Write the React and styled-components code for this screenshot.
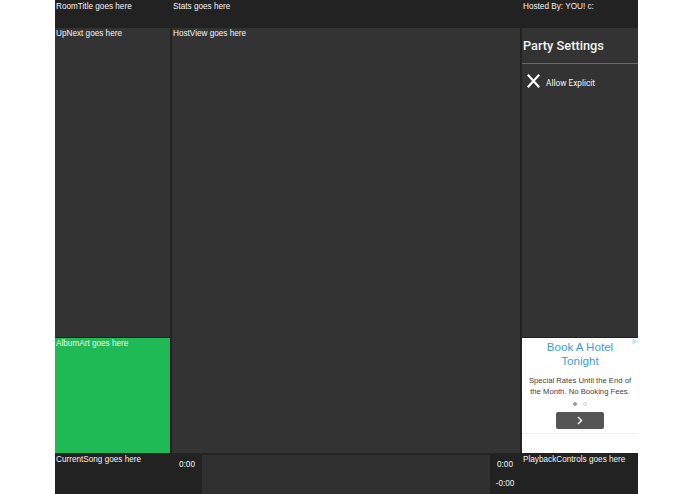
import styled, { createGlobalStyle } from 'styled-components';

const GlobalStyle = createGlobalStyle`
    html, body {
        margin: 0;
        padding: 0;
        background: #fff;
    }
    * {
        box-sizing: border-box;
    }
`;

function CrossIcon() {
    return (
        <svg width='13' height='14' viewBox='0 0 13 14'>
            <path d='M1.5 1.5 L11.5 12.5 M11.5 1.5 L1.5 12.5' stroke='#fff' strokeWidth='2.1' strokeLinecap='square' />
        </svg>
    );
}

function ChevronIcon() {
    return (
        <svg width='6' height='9' viewBox='0 0 6 9'>
            <path d='M1 1 L4.5 4.5 L1 8' fill='none' stroke='#fff' strokeWidth='1.4' />
        </svg>
    );
}

function AdChoices() {
    return (
        <svg width='6' height='7' viewBox='0 0 6 7'>
            <path d='M0.5 0.5 L5.5 3.5 L0.5 6.5 Z' fill='#bfe3f5' />
        </svg>
    );
}

function App() {
    return (
        <>
            <GlobalStyle />
            <Shell>
                <HeaderCell>RoomTitle goes here</HeaderCell>
                <HeaderCell>Stats goes here</HeaderCell>
                <HeaderCell>Hosted By: YOU! c:</HeaderCell>

                <Column>
                    <Panel>UpNext goes here</Panel>
                    <AlbumArt>AlbumArt goes here</AlbumArt>
                </Column>
                <Panel>HostView goes here</Panel>
                <Column>
                    <Settings>
                        <SettingsTitle>Party Settings</SettingsTitle>
                        <SettingRow>
                            <CrossIcon />
                            <span>Allow Explicit</span>
                        </SettingRow>
                    </Settings>
                    <Ad>
                        <AdBadge>
                            <AdChoices />
                        </AdBadge>
                        <AdHeadline>
                            Book A Hotel
                            <br />
                            Tonight
                        </AdHeadline>
                        <AdBody>
                            Special Rates Until the End of
                            <br />
                            the Month. No Booking Fees.
                        </AdBody>
                        <Dots>
                            <Dot $active />
                            <Dot />
                        </Dots>
                        <AdButton>
                            <ChevronIcon />
                        </AdButton>
                        <AdRule />
                    </Ad>
                </Column>

                <FooterCell>CurrentSong goes here</FooterCell>
                <Transport>
                    <TimeColumn>
                        <Time>0:00</Time>
                    </TimeColumn>
                    <ProgressTrack />
                    <TimeColumn>
                        <Time>0:00</Time>
                        <Time>-0:00</Time>
                    </TimeColumn>
                </Transport>
                <FooterCell>PlaybackControls goes here</FooterCell>
            </Shell>
        </>
    );
}

export default App;

const Shell = styled.div`
    width: 583px;
    height: 494px;
    margin: 0 auto;
    transform: translateX(-1px);
    background: #222;
    display: grid;
    grid-template-columns: 115px 348px 116px;
    grid-template-rows: 28px 425px 41px;
    column-gap: 2px;
    font-family: 'Liberation Sans', Arial, sans-serif;
    font-size: 8.2px;
    color: #f4f4f4;
`;

const HeaderCell = styled.div`
    padding: 2px 1px;
    line-height: 10px;
`;

const FooterCell = styled.div`
    padding: 2px 1px;
    line-height: 10px;
`;

const Column = styled.div`
    display: flex;
    flex-direction: column;
    gap: 1px;
`;

const Panel = styled.div`
    flex: 1;
    background: #333;
    padding: 1px 1px;
    line-height: 10px;
`;

const AlbumArt = styled.div`
    height: 115px;
    background: #1fba56;
    padding: 1px 1px;
    line-height: 10px;
`;

const Settings = styled.div`
    flex: 1;
    background: #333;
    font-family: Roboto, 'Liberation Sans', sans-serif;
`;

const SettingsTitle = styled.div`
    font-size: 12.8px;
    font-weight: 500;
    padding: 10px 1px 0;
    height: 36px;
    line-height: 16px;
    border-bottom: 1.5px solid #6a6a6a;
`;

const SettingRow = styled.div`
    display: flex;
    align-items: center;
    gap: 6px;
    padding: 10px 5px 0;
    font-size: 8.3px;

    span {
        margin-top: 3px;
    }
`;

const Ad = styled.div`
    height: 115px;
    background: #fff;
    position: relative;
    display: flex;
    flex-direction: column;
    align-items: center;
    font-family: 'Liberation Sans', Arial, sans-serif;
`;

const AdBadge = styled.div`
    position: absolute;
    top: 0;
    right: 0;
    line-height: 0;
`;

const AdHeadline = styled.div`
    margin-top: 2px;
    font-size: 11.6px;
    line-height: 14px;
    color: #3d9be9;
    text-align: center;
`;

const AdBody = styled.div`
    margin-top: 8px;
    font-size: 7.7px;
    line-height: 10.5px;
    color: #444;
    text-align: center;
`;

const Dots = styled.div`
    display: flex;
    gap: 6px;
    margin-top: 5px;
`;

const Dot = styled.span`
    width: 4px;
    height: 4px;
    border-radius: 50%;
    background: ${(p) => (p.$active ? '#9a9a9a' : '#fff')};
    border: 1px solid ${(p) => (p.$active ? '#9a9a9a' : '#d4d4d4')};
`;

const AdButton = styled.div`
    width: 48px;
    height: 17px;
    margin-top: 6px;
    border-radius: 2px;
    background: #555;
    display: flex;
    align-items: center;
    justify-content: center;
`;

const AdRule = styled.div`
    align-self: stretch;
    height: 1px;
    margin-top: 4px;
    background: #f0f0f0;
`;

const Transport = styled.div`
    display: grid;
    grid-template-columns: 30px 1fr 30px;
`;

const TimeColumn = styled.div`
    display: flex;
    flex-direction: column;
    align-items: center;
    padding-top: 7px;
    gap: 9px;
`;

const Time = styled.span`
    line-height: 10px;
`;

const ProgressTrack = styled.div`
    margin-top: 2px;
    background: #303030;
`;
